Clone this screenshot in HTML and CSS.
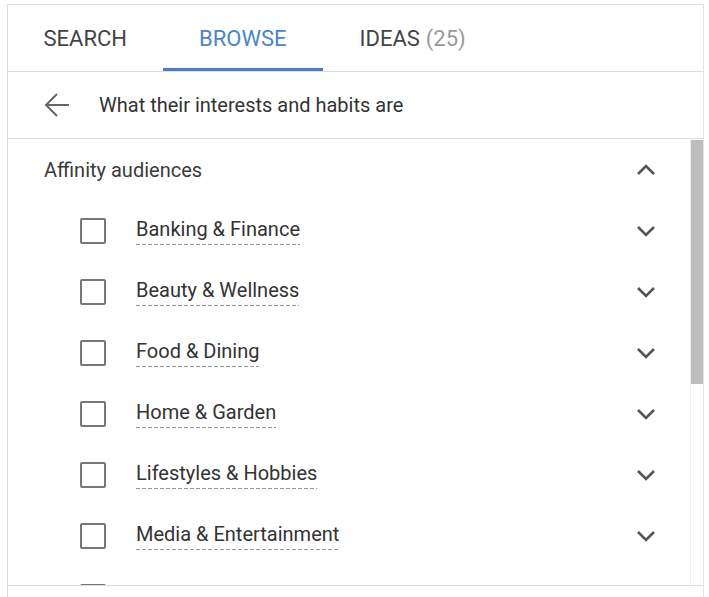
FILE: index.html
```html
<!DOCTYPE html>
<html lang="en">
<head>
    <meta charset="UTF-8">
    <meta name="viewport" content="width=device-width, initial-scale=1.0">
    <title>Browse audiences</title>
    <link rel="stylesheet" href="styles.css">
</head>
<body>
    <div class="panel">
        <div class="tabs">
            <div class="tab">SEARCH</div>
            <div class="tab active">BROWSE</div>
            <div class="tab">IDEAS <span class="count">(25)</span></div>
        </div>
        <div class="crumb">
            <svg class="back" width="26" height="26" viewBox="0 0 26 26">
                <path d="M25 13H2M13 2L2 13l11 11" fill="none" stroke="#666" stroke-width="2"/>
            </svg>
            <span>What their interests and habits are</span>
        </div>
        <div class="list-wrap">
            <div class="list">
                <div class="group">
                    <span>Affinity audiences</span>
                    <svg class="chev" width="20" height="12" viewBox="0 0 20 12"><path d="M2 10l8-8 8 8" fill="none" stroke="#555" stroke-width="2.6"/></svg>
                </div>
                <div class="row">
                    <span class="box"></span>
                    <span class="label">Banking &amp; Finance</span>
                    <svg class="chev" width="20" height="12" viewBox="0 0 20 12"><path d="M2 2l8 8 8-8" fill="none" stroke="#555" stroke-width="2.6"/></svg>
                </div>
                <div class="row">
                    <span class="box"></span>
                    <span class="label">Beauty &amp; Wellness</span>
                    <svg class="chev" width="20" height="12" viewBox="0 0 20 12"><path d="M2 2l8 8 8-8" fill="none" stroke="#555" stroke-width="2.6"/></svg>
                </div>
                <div class="row">
                    <span class="box"></span>
                    <span class="label">Food &amp; Dining</span>
                    <svg class="chev" width="20" height="12" viewBox="0 0 20 12"><path d="M2 2l8 8 8-8" fill="none" stroke="#555" stroke-width="2.6"/></svg>
                </div>
                <div class="row">
                    <span class="box"></span>
                    <span class="label">Home &amp; Garden</span>
                    <svg class="chev" width="20" height="12" viewBox="0 0 20 12"><path d="M2 2l8 8 8-8" fill="none" stroke="#555" stroke-width="2.6"/></svg>
                </div>
                <div class="row">
                    <span class="box"></span>
                    <span class="label">Lifestyles &amp; Hobbies</span>
                    <svg class="chev" width="20" height="12" viewBox="0 0 20 12"><path d="M2 2l8 8 8-8" fill="none" stroke="#555" stroke-width="2.6"/></svg>
                </div>
                <div class="row">
                    <span class="box"></span>
                    <span class="label">Media &amp; Entertainment</span>
                    <svg class="chev" width="20" height="12" viewBox="0 0 20 12"><path d="M2 2l8 8 8-8" fill="none" stroke="#555" stroke-width="2.6"/></svg>
                </div>
                <div class="row">
                    <span class="box"></span>
                </div>
            </div>
            <div class="scrollbar">
                <div class="thumb"></div>
            </div>
        </div>
        <div class="footer"></div>
    </div>
</body>
</html>
```

FILE: styles.css
```css
body {
    font-family: Roboto, "Liberation Sans", sans-serif;
    margin: 0;
    padding: 0;
    background-color: #fff;
    color: #333;
    overflow: hidden;
}
.panel {
    margin: 4px 0 0 7px;
    width: 695px;
    border: 1px solid #ddd;
    border-right-color: #e3e3e3;
    border-bottom: none;
}
.tabs {
    display: flex;
    height: 66px;
    border-bottom: 1px solid #ddd;
}
.tab {
    display: flex;
    align-items: center;
    justify-content: center;
    padding: 3px 36.5px 0;
    font-size: 22px;
    color: #444;
    border-bottom: 3px solid transparent;
    height: 60px;
}
.tab:first-child {
    padding: 3px 35.5px 0;
}
.tab.active {
    color: #4a86c8;
    border-bottom-color: #4c7dc0;
}
.count {
    color: #999;
    margin-left: 6px;
}
.crumb {
    display: flex;
    align-items: center;
    height: 66px;
    padding-left: 36px;
    border-bottom: 1px solid #ddd;
    font-size: 20px;
    color: #333;
}
.back {
    margin-right: 29px;
}
.list-wrap {
    display: flex;
    height: 446px;
    overflow: hidden;
    border-bottom: 1px solid #ddd;
}
.list {
    flex: 1;
    padding: 0 34px 0 36px;
}
.group, .row {
    display: flex;
    align-items: center;
    height: 61px;
    font-size: 20px;
}
.group span {
    flex: 1;
}
.group {
    color: #3a3a3a;
}
.row .box {
    flex: none;
    width: 22px;
    height: 22px;
    border: 2px solid #777;
    border-radius: 2px;
    margin: 0 30px 0 36px;
}
.row .label {
    margin-right: auto;
    padding-bottom: 4px;
    background-image: linear-gradient(to right, #999 60%, transparent 60%);
    background-size: 6px 1px;
    background-repeat: repeat-x;
    background-position: 0 100%;
    color: #333;
}
.chev {
    flex: none;
}
.scrollbar {
    width: 12px;
    padding-top: 1px;
    border-left: 1px solid #eee;
}
.thumb {
    height: 244px;
    background-color: #bdbdbd;
}
.footer {
    height: 12px;
}
```
